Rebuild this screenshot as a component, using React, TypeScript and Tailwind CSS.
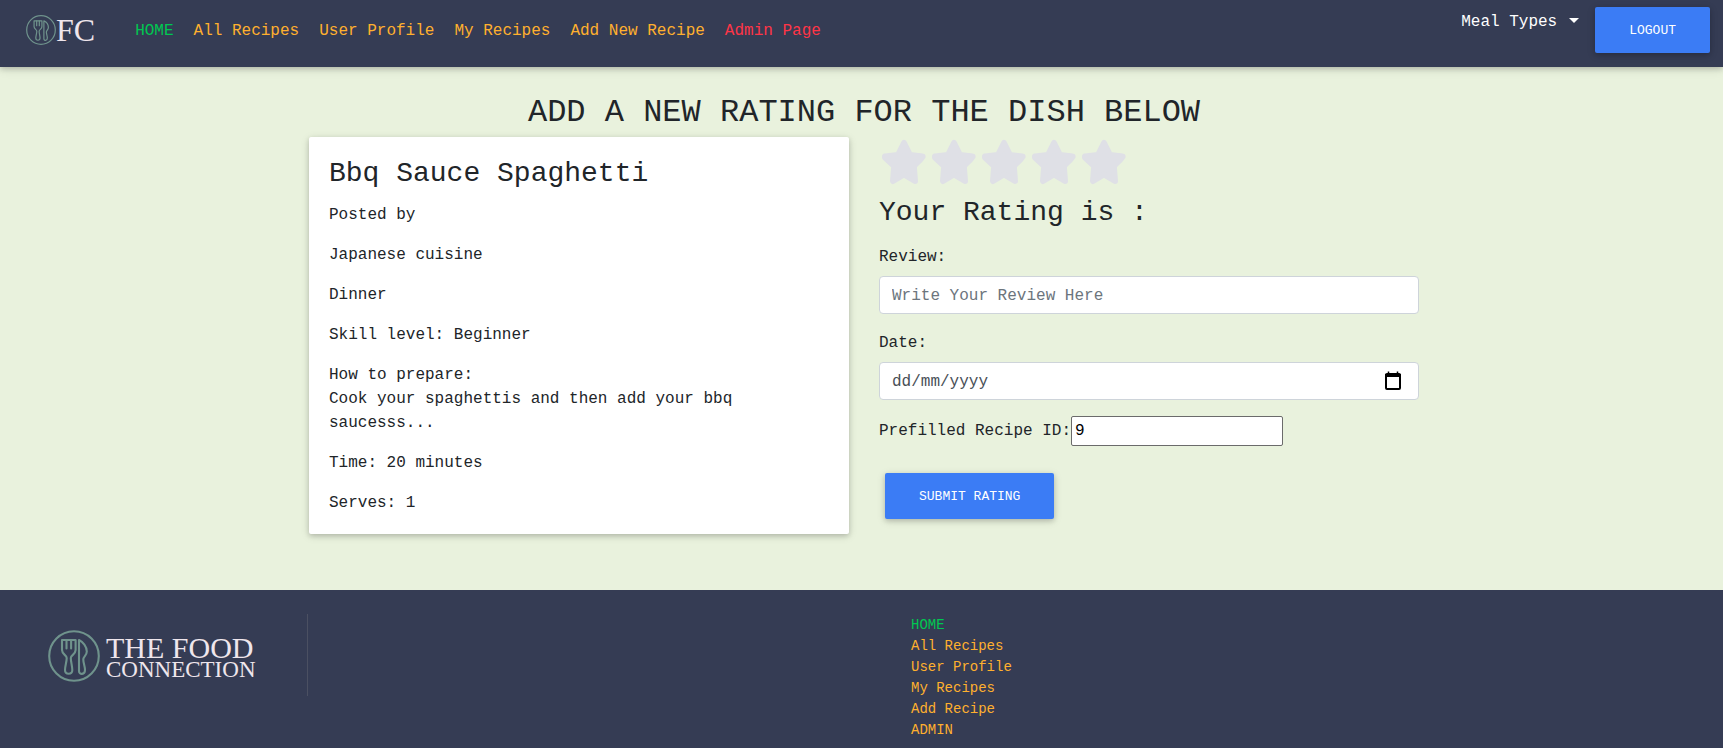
import { useState } from "react";

type NavItem = { label: string; color: string };

const navItems: NavItem[] = [
  { label: "HOME", color: "text-[#00c851]" },
  { label: "All Recipes", color: "text-[#ffb02e]" },
  { label: "User Profile", color: "text-[#ffb02e]" },
  { label: "My Recipes", color: "text-[#ffb02e]" },
  { label: "Add New Recipe", color: "text-[#ffb02e]" },
  { label: "Admin Page", color: "text-[#ff3547]" },
];

const footerItems: NavItem[] = [
  { label: "HOME", color: "text-[#00c851]" },
  { label: "All Recipes", color: "text-[#ffb02e]" },
  { label: "User Profile", color: "text-[#ffb02e]" },
  { label: "My Recipes", color: "text-[#ffb02e]" },
  { label: "Add Recipe", color: "text-[#ffb02e]" },
  { label: "ADMIN", color: "text-[#ffb02e]" },
];

function Emblem({ className }: { className: string }) {
  return (
    <svg viewBox="0 0 52 52" className={className} fill="none" stroke="#6f938c" strokeWidth="2.1" strokeLinecap="round" strokeLinejoin="round" aria-hidden="true">
      <circle cx="26" cy="26" r="24.8" />
      <path d="M14 10H27.600V20C27.600 24.500 22.800 25 22.800 28C22.800 32 24.300 36 24.300 40C24.300 45 17 45 17 40C17 36 18.700 32 18.700 28C18.700 25 14 24.500 14 20Z" />
      <path d="M18.500 10V18.500M23.100 10V18.500" />
      <path d="M31 10C35 12 38.800 16.500 38.800 21.500C38.800 25.500 35.300 26.500 35.300 29.500C35.300 33 37 36 37 40C37 45 31 45 31 41Z" />
    </svg>
  );
}

function Star() {
  return (
    <svg viewBox="0 0 50 48" className="block h-12 w-[50px]" fill="#dfe0e6" stroke="#dfe0e6" strokeWidth="6" strokeLinejoin="round" aria-hidden="true">
      <path d="M25 6L31 18L43.500 19.500C44 19.500 43 21 34.800 29L36 44L25 37.500L14 44L15.200 29L6 20.500L6 19.500L19 18Z" />
    </svg>
  );
}

function ActionButton({ label, type }: { label: string; type: "button" | "submit" }) {
  return (
    <button
      type={type}
      className="rounded-xs bg-[#3b7cf5] px-[34px] pt-[14px] pb-3 text-[13px] leading-5 text-white shadow-[0_2px_5px_rgba(0,0,0,0.16),0_2px_10px_rgba(0,0,0,0.12)]"
    >
      {label}
    </button>
  );
}

const fieldClass =
  "block h-[38px] w-full rounded-sm border border-[#ced4da] bg-white px-3 pt-0.5 text-base text-[#495057] outline-none";

export default function App() {
  const [rating, setRating] = useState(0);

  return (
    <div className="flex min-h-screen flex-col bg-[#e9f2dd] font-['Liberation_Mono',monospace] text-base leading-6 text-[#212529]">
      <header className="relative flex h-[67px] items-start justify-between bg-[#353c54] pr-[13px] pl-[26px] shadow-[0_2px_5px_rgba(0,0,0,0.16),0_2px_10px_rgba(0,0,0,0.12)]">
        <div className="flex h-[61px] items-center">
          <a href="#home" className="flex items-center pb-0.5 font-['Liberation_Serif',serif] text-[32px] leading-8 text-[#efe6ec]">
            <Emblem className="size-[30px]" />
            FC
          </a>
          <nav aria-label="Main" className="ml-10 flex gap-5">
            {navItems.map((item) => (
              <a key={item.label} href="#nav" className={item.color}>
                {item.label}
              </a>
            ))}
          </nav>
        </div>
        <div className="flex items-start gap-4 pt-[7px]">
          <button type="button" aria-haspopup="menu" className="flex items-center gap-3 pt-[3px] text-white">
            Meal Types
            <svg viewBox="0 0 10 5" className="mb-1 h-[5px] w-2.5" fill="currentColor" aria-hidden="true">
              <path d="M0 0H10L5 5Z" />
            </svg>
          </button>
          <ActionButton label="LOGOUT" type="button" />
        </div>
      </header>

      <main className="pt-[27px] pb-14 pl-[5px]">
        <h1 className="mb-[5px] text-center text-[32px] leading-[38px]">ADD A NEW RATING FOR THE DISH BELOW</h1>
        <div className="mx-auto grid max-w-[1110px] grid-cols-2 gap-[30px]">
          <section className="flex flex-col gap-4 rounded-xs bg-white px-5 pt-5 pb-[19px] shadow-[0_2px_5px_rgba(0,0,0,0.16),0_2px_10px_rgba(0,0,0,0.12)]">
            <h2 className="-mb-1 text-[28px] leading-[34px]">Bbq Sauce Spaghetti</h2>
            <p>Posted by</p>
            <p>Japanese cuisine</p>
            <p>Dinner</p>
            <p>Skill level: Beginner</p>
            <p>
              How to prepare:
              <br />
              Cook your spaghettis and then add your bbq saucesss...
            </p>
            <p>Time: 20 minutes</p>
            <p>Serves: 1</p>
          </section>

          <form onSubmit={(e) => e.preventDefault()}>
            <div className="flex">
              {[1, 2, 3, 4, 5].map((n) => (
                <button key={n} type="button" aria-label={`Rate ${n}`} onClick={() => setRating(n)}>
                  <Star />
                </button>
              ))}
            </div>
            <h2 className="mt-[11px] mb-[15px] text-[28px] leading-[34px]">Your Rating is :{rating > 0 && ` ${rating}`}</h2>
            <label htmlFor="review" className="mb-[7px] block">
              Review:
            </label>
            <input id="review" type="text" placeholder="Write Your Review Here" className={`${fieldClass} mb-[17px] placeholder:text-[#6c757d]`} />
            <label htmlFor="date" className="mb-[7px] block">
              Date:
            </label>
            <div className="relative mb-4">
              <input id="date" type="text" placeholder="dd/mm/yyyy" className={`${fieldClass} placeholder:text-[#495057]`} />
              <button type="button" aria-label="Open calendar" className="absolute top-[9px] right-[17px]">
                <svg viewBox="0 0 18 20" className="h-5 w-[18px]" fill="none" stroke="#000" aria-hidden="true">
                  <rect x="2" y="3" width="14" height="15" rx="1" strokeWidth="2" />
                  <path d="M1 4.500H17" strokeWidth="3" />
                  <path d="M4.500 0.500V4M13.500 0.500V4" strokeWidth="1.500" />
                </svg>
              </button>
            </div>
            <div className="mb-[27px] flex items-center">
              <label htmlFor="recipe-id">Prefilled Recipe ID:</label>
              <input id="recipe-id" type="text" defaultValue="9" className="h-[30px] w-[212px] rounded-xs border border-[#6b6b6b] bg-white px-[3px] text-base text-black outline-none" />
            </div>
            <div className="pl-1.5">
              <ActionButton label="SUBMIT RATING" type="submit" />
            </div>
          </form>
        </div>
      </main>

      <footer className="flex grow items-start bg-[#353c54] pt-6 pb-1">
        <div className="flex h-[82px] w-[308px] shrink-0 items-center border-r border-[#4b5062] pl-12">
          <a href="#home" className="flex items-center gap-1.5 pt-0.5 font-['Liberation_Serif',serif] text-[#efe6ec]">
            <Emblem className="size-[52px]" />
            <span className="flex flex-col pt-1">
              <span className="text-[30px] leading-6">THE FOOD</span>
              <span className="text-[23px] leading-5">CONNECTION</span>
            </span>
          </a>
        </div>
        <div className="grid grow grid-cols-[603fr_812fr]">
          <nav aria-label="Footer" className="col-start-2 flex flex-col items-start pt-px text-sm leading-[21px]">
            {footerItems.map((item) => (
              <a key={item.label} href="#nav" className={item.color}>
                {item.label}
              </a>
            ))}
          </nav>
        </div>
      </footer>
    </div>
  );
}
